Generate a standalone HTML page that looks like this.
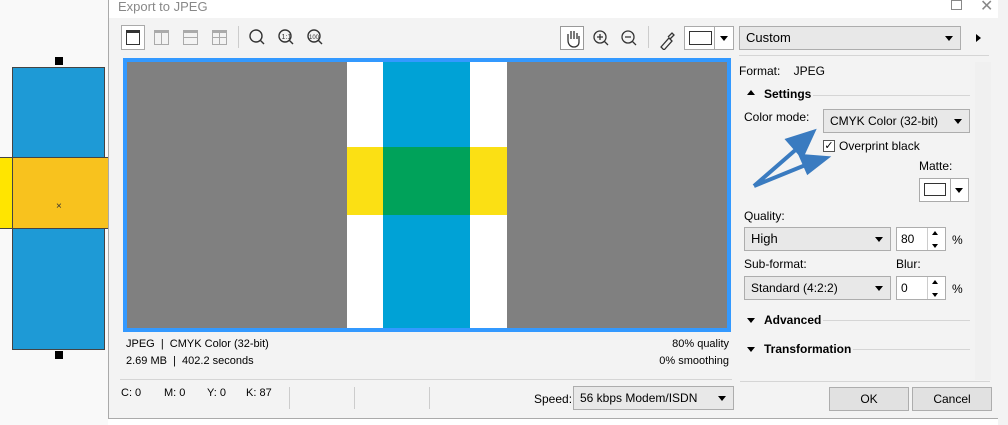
<!DOCTYPE html>
<html><head><style>
body{margin:0;width:1008px;height:425px;background:#fff;position:relative;overflow:hidden;font-family:"Liberation Sans",sans-serif;font-size:12px;color:#000}
.a{position:absolute}
.dd{position:absolute;background:#e8e8e8;border:1px solid #adadad;box-sizing:border-box;padding:0 0 0 6px;line-height:22px}
.dd:after{content:"";position:absolute;right:7px;top:9px;border:4px solid transparent;border-top:5px solid #000}
.sp{position:absolute;background:#fff;border:1px solid #adadad;box-sizing:border-box;padding-left:4px;line-height:22px}
.btn{position:absolute;background:#e1e1e1;border:1px solid #adadad;box-sizing:border-box;text-align:center;line-height:22px}
.ico{position:absolute;border:1px solid #999;box-sizing:border-box}
.hr{position:absolute;height:1px;background:#d5d5d5}
b{font-weight:bold}
</style></head><body>
<!-- left canvas -->
<div class="a" style="left:0;top:0;width:108px;height:425px;background:#f9f9f9"></div>
<div class="a" style="left:12px;top:67px;width:93px;height:283px;background:#1e9ad6;border:1px solid #444;box-sizing:border-box"></div>
<div class="a" style="left:0;top:157px;width:108px;height:72px;background:#f8c21e;border-top:1px solid #444;border-bottom:1px solid #444;box-sizing:border-box"></div>
<div class="a" style="left:0;top:157px;width:13px;height:72px;background:#ffe500;border-top:1px solid #444;border-bottom:1px solid #444;border-right:1px solid #444;box-sizing:border-box"></div>
<div class="a" style="left:55px;top:57px;width:8px;height:8px;background:#000"></div>
<div class="a" style="left:55px;top:351px;width:8px;height:8px;background:#000"></div>
<div class="a" style="left:56px;top:201px;font-size:10px;color:#333">×</div>
<!-- dialog -->
<div class="a" style="left:108px;top:0;width:890px;height:418px;background:#f3f3f3;border-left:1px solid #aaa;border-right:1px solid #aaa;border-bottom:1px solid #aaa"></div>
<div class="a" style="left:109px;top:0;width:889px;height:18px;background:#fff"></div>
<div class="a" style="left:118px;top:-1px;font-size:13px;color:#888">Export to JPEG</div>
<div class="a" style="left:951px;top:0;width:9px;height:8px;border:1px solid #888"></div>
<div class="a" style="left:980px;top:-4px;font-size:16px;color:#888">✕</div>
<div class="a" style="left:998px;top:0;width:10px;height:425px;background:#f3f3f3"></div>
<!-- toolbar -->
<div class="ico" style="left:121px;top:25px;width:24px;height:25px;border-color:#aaa;background:#fff"></div>
<div class="a" style="left:126px;top:30px;width:14px;height:15px;border:1.5px solid #333;border-top-width:3px;box-sizing:border-box"></div>
<div class="a" style="left:154px;top:30px;width:15px;height:15px;border:1px solid #aaa;box-sizing:border-box;border-top-width:3px"></div>
<div class="a" style="left:161px;top:30px;width:1px;height:15px;background:#aaa"></div>
<div class="a" style="left:183px;top:30px;width:15px;height:15px;border:1px solid #aaa;box-sizing:border-box;border-top-width:3px"></div>
<div class="a" style="left:183px;top:37px;width:15px;height:1px;background:#aaa"></div>
<div class="a" style="left:212px;top:30px;width:15px;height:15px;border:1px solid #aaa;box-sizing:border-box;border-top-width:3px"></div>
<div class="a" style="left:212px;top:37px;width:15px;height:1px;background:#aaa"></div>
<div class="a" style="left:219px;top:30px;width:1px;height:15px;background:#aaa"></div>
<div class="a" style="left:238px;top:26px;width:1px;height:22px;background:#ccc"></div>
<svg class="a" style="left:248px;top:28px" width="80" height="20" fill="none" stroke="#333" stroke-width="1.4">
<circle cx="8" cy="8" r="6"/><path d="M12 12l4 4"/>
<circle cx="37" cy="8" r="6"/><path d="M41 12l4 4"/>
<circle cx="66" cy="8" r="6"/><path d="M70 12l4 4"/>
<text x="33.5" y="11" font-size="7" fill="#333" stroke="none">1:1</text>
<text x="61" y="11" font-size="6" fill="#333" stroke="none">100</text>
</svg>
<div class="ico" style="left:560px;top:26px;width:24px;height:24px;background:#fff"></div>
<svg class="a" style="left:563px;top:28px" width="120" height="22" fill="none" stroke="#333" stroke-width="1.3">
<path d="M5 12V6M8 11V3M11 11V3M14 11V5M5 12c0 5 3 7 6 7s5-2 5-5V8"/>
<circle cx="37" cy="9" r="6"/><path d="M41 13l4 4M34 9h6M37 6v6"/>
<circle cx="65" cy="9" r="6"/><path d="M69 13l4 4M62 9h6"/>
<path d="M98 19l8-9 3 3-8 9zM105 9l4-4 2 2-4 4" />
</svg>
<div class="a" style="left:648px;top:26px;width:1px;height:22px;background:#ccc"></div>
<div class="a" style="left:684px;top:26px;width:50px;height:24px;border:1px solid #aaa;box-sizing:border-box;background:#fff"></div>
<div class="a" style="left:689px;top:31px;width:23px;height:14px;border:1px solid #333;box-sizing:border-box"></div>
<div class="a" style="left:714px;top:26px;width:1px;height:24px;background:#aaa"></div>
<div class="a" style="left:720px;top:36px;border:4px solid transparent;border-top:5px solid #000"></div>
<div class="dd" style="left:739px;top:26px;width:222px;height:24px;font-size:13px">Custom</div>
<div class="a" style="left:976px;top:34px;border:4px solid transparent;border-left:5px solid #000"></div>
<div class="hr" style="left:739px;top:55px;width:250px"></div>
<!-- preview -->
<div class="a" style="left:123px;top:58px;width:608px;height:274px;background:#3399ff"></div>
<div class="a" style="left:127px;top:62px;width:600px;height:266px;background:#808080"></div>
<div class="a" style="left:347px;top:62px;width:160px;height:266px;background:#fff"></div>
<div class="a" style="left:383px;top:62px;width:87px;height:266px;background:#00a2d6"></div>
<div class="a" style="left:347px;top:147px;width:160px;height:68px;background:#fbe014"></div>
<div class="a" style="left:383px;top:147px;width:87px;height:68px;background:#00a25a"></div>
<div class="a" style="left:126px;top:338px;font-size:11px">JPEG &nbsp;| &nbsp;CMYK Color (32-bit)</div>
<div class="a" style="left:126px;top:355px;font-size:11px">2.69 MB &nbsp;| &nbsp;402.2 seconds</div>
<div class="a" style="left:600px;width:129px;top:338px;font-size:11px;text-align:right">80% quality</div>
<div class="a" style="left:600px;width:129px;top:355px;font-size:11px;text-align:right">0% smoothing</div>
<div class="hr" style="left:120px;top:379px;width:612px"></div>
<div class="a" style="left:121px;top:387px;font-size:11px">C: 0</div>
<div class="a" style="left:164px;top:387px;font-size:11px">M: 0</div>
<div class="a" style="left:207px;top:387px;font-size:11px">Y: 0</div>
<div class="a" style="left:246px;top:387px;font-size:11px">K: 87</div>
<div class="a" style="left:289px;top:387px;width:1px;height:22px;background:#ccc"></div>
<div class="a" style="left:354px;top:387px;width:1px;height:22px;background:#ccc"></div>
<div class="a" style="left:429px;top:387px;width:1px;height:22px;background:#ccc"></div>
<div class="a" style="left:534px;top:392px;font-size:12px">Speed:</div>
<div class="dd" style="left:573px;top:386px;width:161px;height:24px">56 kbps Modem/ISDN</div>
<!-- right panel -->
<div class="a" style="left:975px;top:62px;width:16px;height:318px;background:#f0f0f0"></div>
<div class="a" style="left:739px;top:64px">Format: &nbsp;&nbsp;&nbsp;JPEG</div>
<div class="a" style="left:747px;top:90px;border:4px solid transparent;border-bottom:5px solid #000;border-top:0"></div>
<div class="a" style="left:764px;top:87px"><b>Settings</b></div>
<div class="hr" style="left:813px;top:95px;width:157px"></div>
<div class="a" style="left:744px;top:110px">Color mode:</div>
<div class="dd" style="left:823px;top:109px;width:147px;height:24px">CMYK Color (32-bit)</div>
<div class="a" style="left:823px;top:140px;width:12px;height:12px;background:#fff;border:1px solid #555;box-sizing:border-box;font-size:11px;line-height:10px;text-align:center">✓</div>
<div class="a" style="left:839px;top:139px">Overprint black</div>
<svg class="a" style="left:740px;top:120px" width="100" height="75"><g stroke="#3a7bc0" stroke-width="4" fill="#3a7bc0"><path d="M14 66L60 26M14 66L68 44"/><path d="M73 12L48 20 62 36z"/><path d="M86 38L61 36 68 52z"/></g></svg>
<div class="a" style="left:919px;top:159px">Matte:</div>
<div class="a" style="left:919px;top:178px;width:50px;height:24px;border:1px solid #aaa;box-sizing:border-box;background:#fff"></div>
<div class="a" style="left:924px;top:183px;width:22px;height:13px;border:1px solid #333;box-sizing:border-box"></div>
<div class="a" style="left:950px;top:178px;width:1px;height:24px;background:#aaa"></div>
<div class="a" style="left:955px;top:188px;border:4px solid transparent;border-top:5px solid #000"></div>
<div class="a" style="left:744px;top:209px">Quality:</div>
<div class="dd" style="left:744px;top:227px;width:147px;height:24px;font-size:13px">High</div>
<div class="sp" style="left:896px;top:227px;width:50px;height:24px">80</div>
<div class="a" style="left:927px;top:228px;width:1px;height:22px;background:#ccc"></div>
<div class="a" style="left:932px;top:231px;border:3px solid transparent;border-bottom:4px solid #000;border-top:0"></div>
<div class="a" style="left:932px;top:244px;border:3px solid transparent;border-top:4px solid #000;border-bottom:0"></div>
<div class="a" style="left:952px;top:233px">%</div>
<div class="a" style="left:744px;top:257px">Sub-format:</div>
<div class="a" style="left:896px;top:257px">Blur:</div>
<div class="dd" style="left:744px;top:276px;width:147px;height:24px">Standard (4:2:2)</div>
<div class="sp" style="left:896px;top:276px;width:50px;height:24px">0</div>
<div class="a" style="left:927px;top:277px;width:1px;height:22px;background:#ccc"></div>
<div class="a" style="left:932px;top:280px;border:3px solid transparent;border-bottom:4px solid #000;border-top:0"></div>
<div class="a" style="left:932px;top:293px;border:3px solid transparent;border-top:4px solid #000;border-bottom:0"></div>
<div class="a" style="left:952px;top:282px">%</div>
<div class="a" style="left:747px;top:318px;border:4px solid transparent;border-top:5px solid #000;border-bottom:0"></div>
<div class="a" style="left:764px;top:313px"><b>Advanced</b></div>
<div class="hr" style="left:823px;top:320px;width:147px"></div>
<div class="a" style="left:747px;top:347px;border:4px solid transparent;border-top:5px solid #000;border-bottom:0"></div>
<div class="a" style="left:764px;top:342px"><b>Transformation</b></div>
<div class="hr" style="left:853px;top:349px;width:117px"></div>
<div class="hr" style="left:740px;top:381px;width:250px"></div>
<div class="btn" style="left:829px;top:387px;width:80px;height:24px">OK</div>
<div class="btn" style="left:912px;top:387px;width:80px;height:24px">Cancel</div>
</body></html>
